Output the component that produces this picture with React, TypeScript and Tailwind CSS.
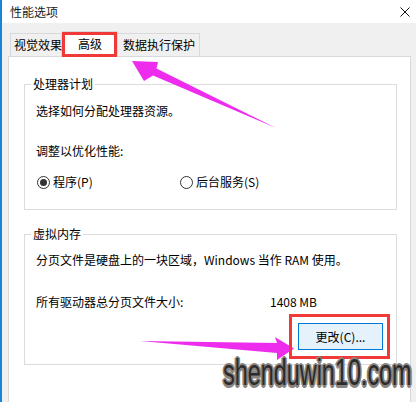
import React from "react";

function Radio({ checked }: { checked?: boolean }) {
  return (
    <span className="flex h-[13px] w-[13px] items-center justify-center rounded-full border border-[#333333] bg-white">
      {checked && <span className="h-[7px] w-[7px] rounded-full bg-[#333333]" />}
    </span>
  );
}

function GroupBox({
  label,
  className,
  children,
}: {
  label: string;
  className: string;
  children: React.ReactNode;
}) {
  return (
    <div className={`relative border border-[#dcdcdc] ${className}`}>
      <span className="absolute -top-[9px] left-[6px] bg-white px-[2px] leading-[16px]">
        {label}
      </span>
      {children}
    </div>
  );
}

export default function App() {
  return (
    <div className="relative h-[402px] w-[416px] overflow-hidden border-l-2 border-[#1883d7] bg-[#f0f0f0] font-['Noto_Sans_CJK_SC',sans-serif] text-[12px] text-black">
      {/* title bar */}
      <div className="flex h-[23px] items-center justify-between bg-white pl-[8px] pr-[6px]">
        <span className="leading-[16px] text-[#1a1a1a]">性能选项</span>
        <svg width="10" height="10" viewBox="0 0 10 10">
          <path d="M0.5 0.5 L9.5 9.5 M9.5 0.5 L0.5 9.5" stroke="#111" strokeWidth="1" fill="none" />
        </svg>
      </div>

      {/* tabs */}
      <div className="relative z-10 mt-[10px] flex h-[23px] items-start pl-[8px]">
        <div className="flex h-[23px] w-[52px] shrink-0 items-center whitespace-nowrap border border-b-0 border-[#d9d9d9] bg-[#f0f0f0] pl-[3px] leading-[16px]">
          视觉效果
        </div>
        <div className="relative z-10 -mt-[2px] flex h-[26px] w-[56px] shrink-0 items-center justify-center border border-b-0 border-[#d9d9d9] bg-white pb-[2px] leading-[16px]">
          高级
        </div>
        <div className="flex h-[23px] w-[82px] shrink-0 items-center whitespace-nowrap border border-b-0 border-l-0 border-[#d9d9d9] bg-[#f0f0f0] pl-[5px] leading-[16px]">
          数据执行保护
        </div>
      </div>

      {/* tab panel */}
      <div className="ml-[6px] h-[360px] w-[403px] border border-[#d9d9d9] bg-white pl-[15px] pt-[27px]">
        <GroupBox label="处理器计划" className="h-[126px] w-[373px] pl-[11px] pt-[18px]">
          <p className="leading-[16px]">选择如何分配处理器资源。</p>
          <p className="mt-[24px] leading-[16px]">调整以优化性能:</p>
          <div className="mt-[15px] flex h-[16px] items-center">
            <label className="ml-[1px] flex w-[143px] items-center gap-[3px] leading-[16px]">
              <Radio checked />
              程序(P)
            </label>
            <label className="flex items-center gap-[3px] leading-[16px]">
              <Radio />
              后台服务(S)
            </label>
          </div>
        </GroupBox>

        <GroupBox label="虚拟内存" className="mt-[24px] h-[131px] w-[373px] pl-[11px] pt-[17px]">
          <p className="leading-[16px]">分页文件是硬盘上的一块区域，Windows 当作 RAM 使用。</p>
          <div className="mt-[26px] flex leading-[16px]">
            <span className="w-[234px]">所有驱动器总分页文件大小:</span>
            <span>1408 MB</span>
          </div>
          <div className="mt-[13px] flex justify-end pr-[13px]">
            <button className="h-[27px] w-[85px] border border-[#0078d7] bg-[#e5f1fb] leading-[16px]">
              更改(C)...
            </button>
          </div>
        </GroupBox>
      </div>

      {/* annotations */}
      <svg
        className="pointer-events-none absolute -left-[2px] top-0 z-20"
        width="416"
        height="402"
        viewBox="0 0 416 402"
      >
        <polygon
          points="132,61 158,62 156.5,68.5 276,128 153,75.5 144,81"
          fill="#ee2cee"
        />
        <polygon
          points="140,341 277,343 275,337 294,348.5 277,360 277,353"
          fill="#ee2cee"
        />
        <rect x="63.5" y="33.5" width="52" height="22" fill="none" stroke="#f03a3a" strokeWidth="3" />
        <rect x="290.5" y="315.5" width="98" height="42" fill="none" stroke="#f03a3a" strokeWidth="3" />
      </svg>

      {/* watermark */}
      <div className="pointer-events-none absolute left-[221px] top-[355px] z-30 origin-left scale-x-[0.65] whitespace-nowrap font-['Liberation_Sans',sans-serif] text-[36px] leading-none text-[#2b2b2b] [text-shadow:1.5px_1.5px_0_#8a8481,-1.5px_-1.5px_0_#8a8481,1.5px_-1.5px_0_#8a8481,-1.5px_1.5px_0_#8a8481,2.5px_0_0_#8a8481,-2.5px_0_0_#8a8481,0_2.5px_0_#8a8481,0_-2.5px_0_#8a8481]">
        shenduwin10.com
      </div>
    </div>
  );
}
